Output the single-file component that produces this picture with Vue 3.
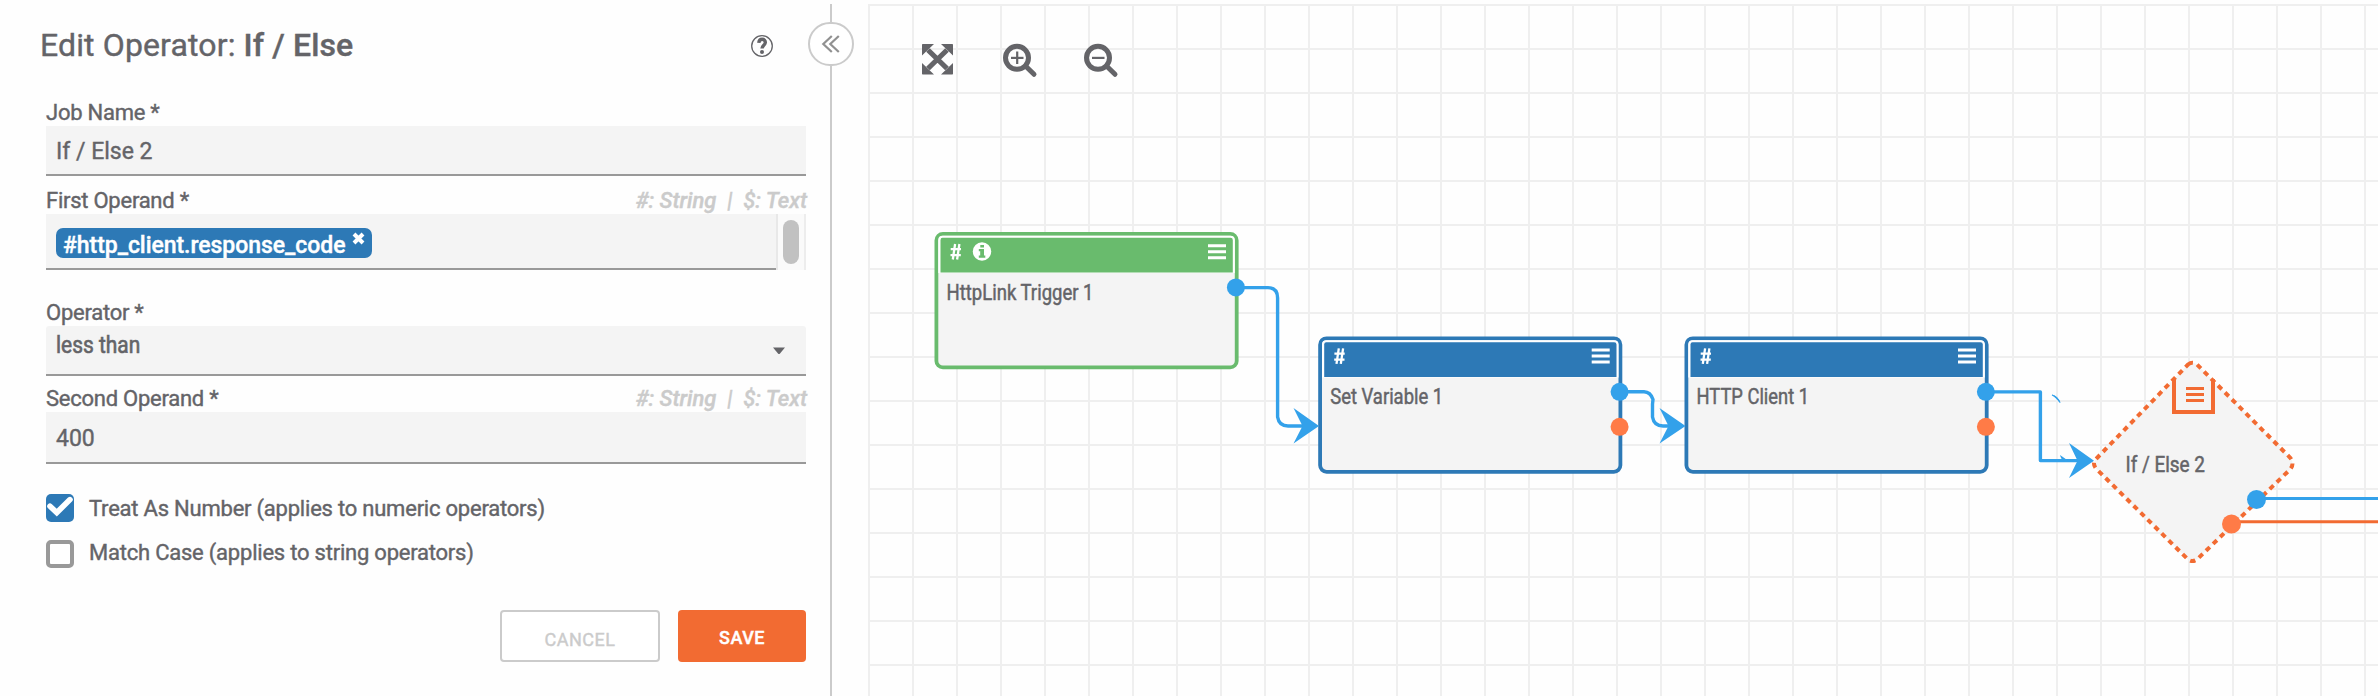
<script setup>
const nodes = [
  { id: 'trigger', title: 'HttpLink Trigger 1', width: 147, x: 934.5, y: 232, color: '#69bb6d', info: true, dots: ['#33a1ea'] },
  { id: 'variable', title: 'Set Variable 1', width: 113, x: 1318.2, y: 336.4, color: '#2d79b6', info: false, dots: ['#33a1ea', '#ff7b47'] },
  { id: 'client', title: 'HTTP Client 1', width: 112.5, x: 1684.5, y: 336.4, color: '#2d79b6', info: false, dots: ['#33a1ea', '#ff7b47'] },
]
</script>

<template>
  <main class="app">
    <section class="panel">
      <header class="heading">
        <h1>Edit Operator: <b>If / Else</b></h1>
        <svg class="help" width="24" height="24" viewBox="0 0 24 24">
          <circle cx="12" cy="12" r="10.3" fill="none" stroke="#646468" stroke-width="1.3" />
          <path d="M8.8 8.9C9.2 3.9 15.6 4.4 15.3 8.6C15.1 11.2 12 11.3 12 14.6" fill="none" stroke="#646468" stroke-width="3.4" />
          <circle cx="12" cy="18" r="2" fill="#646468" />
        </svg>
      </header>

      <div class="row label-job"><label>Job Name *</label></div>
      <div class="field job"><span>If / Else 2</span></div>

      <div class="row label-first"><label>First Operand *</label><i>#: String &nbsp;|&nbsp; $: Text</i></div>
      <div class="operand">
        <div class="field tags">
          <span class="tag"><b>#http_client.response_code</b>
            <svg width="13" height="13" viewBox="0 0 13 13"><path d="M2 2L11 11M11 2L2 11" stroke="#fff" stroke-width="4" /></svg>
          </span>
        </div>
        <div class="scroll"><div class="thumb"></div></div>
      </div>

      <div class="row label-op"><label>Operator *</label></div>
      <div class="field select"><span>less than</span>
        <svg width="12" height="8" viewBox="0 0 12 8"><path d="M0 .5H12L6.8 6.7Q6 7.5 5.2 6.7Z" fill="#646468" /></svg>
      </div>

      <div class="row label-second"><label>Second Operand *</label><i>#: String &nbsp;|&nbsp; $: Text</i></div>
      <div class="field second"><span>400</span></div>

      <div class="check first">
        <svg width="28" height="28" viewBox="0 0 28 28">
          <rect width="28" height="28" rx="5" fill="#2d79b6" />
          <path d="M4 12.2L10.8 18.6L24 5.6" fill="none" stroke="#fff" stroke-width="5.6" stroke-linejoin="miter" stroke-linecap="round" />
        </svg>
        <span>Treat As Number (applies to numeric operators)</span>
      </div>
      <div class="check">
        <svg width="28" height="28" viewBox="0 0 28 28"><rect x="2" y="2" width="24" height="24" rx="3" fill="#fff" stroke="#999" stroke-width="4" /></svg>
        <span>Match Case (applies to string operators)</span>
      </div>

      <footer class="actions">
        <button class="cancel">CANCEL</button>
        <button class="save">SAVE</button>
      </footer>
    </section>

    <div class="divider">
      <svg class="toggle" width="46" height="44" viewBox="0 0 46 44">
        <rect x="1" y="1" width="44" height="42" rx="21" fill="#fff" stroke="#cbcbcb" stroke-width="2" />
        <path d="M23.8 14L15.3 22L23.8 30M30.8 14L22.3 22L30.8 30" fill="none" stroke="#919191" stroke-width="2.2" />
      </svg>
    </div>

    <section class="canvas">
      <svg width="1510" height="692" viewBox="868 4 1510 692">
        <defs>
          <pattern id="grid" x="868" y="4" width="44" height="44" patternUnits="userSpaceOnUse">
            <path d="M0 1H44M1 0V44" stroke="#efefef" stroke-width="2" />
          </pattern>
          <g id="menu"><path d="M0 1.5H18M0 7.5H18M0 13.5H18" stroke-width="3" /></g>
        </defs>
        <rect x="868" y="4" width="1510" height="692" fill="url(#grid)" />

        <g fill="none" stroke="#646468">
          <path d="M928 50L947 68.500M947 50L928 68.500" stroke-width="5.200" />
          <path d="M922 44.700Q922 44 922.700 44H934L922 55.500ZM953 44.700Q953 44 952.300 44H941L953 55.500ZM922 73.800Q922 74.500 922.700 74.500H934L922 63ZM953 73.800Q953 74.500 952.300 74.500H941L953 63Z" fill="#646468" stroke="none" />
          <g v-for="x in [1017, 1098]" :key="x">
            <circle :cx="x" cy="57.800" r="11.500" stroke-width="5" />
            <path :d="`M${x + 8.5} 66L${x + 17} 74.300`" stroke-width="5" stroke-linecap="round" />
            <path :d="`M${x - 6} 57.900H${x + 6.500}`" stroke-width="2.200" />
          </g>
          <path d="M1017.200 51.500V64" stroke-width="2.200" />
        </g>

        <g v-for="n in nodes" :key="n.id" :transform="`translate(${n.x} ${n.y})`">
          <rect x="1.900" y="1.900" width="300.300" height="133.500" rx="6.500" fill="#f4f4f4" :stroke="n.color" stroke-width="3.800" />
          <path d="M3.800 41V8Q3.800 3.800 8 3.800H296Q300.300 3.800 300.300 8V41Z" fill="#fff" />
          <path d="M6 40.500V8Q6 5.800 8 5.800H296Q298.300 5.800 298.300 8V40.500Z" :fill="n.color" />
          <g fill="none" stroke="#fff"><path d="M16.200 17.200H26.500M16 23.200H26.300M20.600 12L18.300 27.500M24.900 12L22.600 27.500" stroke-width="2.300" /></g>
          <g v-if="n.info">
            <circle cx="47.500" cy="19.500" r="9.200" fill="#fff" />
            <path d="M45.800 13H49.500V15.500H45.800ZM44.300 17H49.500V23.500H50.800V25.700H44.300V23.500H45.700V19.200H44.300Z" :fill="n.color" />
          </g>
          <use href="#menu" x="273.500" y="12.200" stroke="#fff" />
          <text class="name" x="12" y="67.800" :textLength="n.width" lengthAdjust="spacingAndGlyphs">{{ n.title }}</text>
        </g>

        <path class="shape" d="M2188 364.500Q2192.500 361 2197 364.500L2290 457.500Q2295 463.500 2290 469.500L2198 558.500Q2192.500 563.500 2187 558.500L2096.500 469Q2091.500 463.500 2096.500 458.500Z" fill="#f4f4f4" stroke="#f26b32" stroke-width="4" stroke-dasharray="5.300 4.550" />
        <path d="M2174 379V412H2213V379" fill="none" stroke="#f26b32" stroke-width="4" />
        <use href="#menu" x="2186" y="387" stroke="#f26b32" />
        <text class="name" x="2125.500" y="472" textLength="79.500" lengthAdjust="spacingAndGlyphs">If / Else 2</text>

        <g fill="none" stroke="#33a1ea" stroke-width="3.400">
          <path d="M1236 287.600H1268Q1277.600 288 1277.600 298V417Q1279 426 1288 426H1304" />
          <path d="M1619 391.800H1644Q1650.500 392 1653 399.500L1652.500 404V417Q1654 426 1663 426H1670" />
          <path d="M1986 391.900H2040.400V460.600H2080" stroke-linejoin="round" />
          <path d="M2257 498.500H2378" stroke-width="3" />
          <path d="M2232 521.700H2378" stroke="#f26b32" stroke-width="3" />
        </g>
        <g fill="#33a1ea">
          <path d="M1293.500 408L1319 426L1293.500 443.500L1302.500 426Z" />
          <path d="M1659.500 408L1685.500 426L1659.500 443.500L1668.500 426Z" />
          <path d="M2069 443L2094 460.700L2069 478L2077.500 460.700Z" />
          <path d="M2052 394.500Q2058 395.500 2060.500 403Q2056 398.500 2052 394.500Z" />
          <path d="M2060 455L2070 462H2065Q2061 460 2060 455Z" />
        </g>
        <g fill="none" stroke="#33a1ea" stroke-width="1.200">
          <path d="M2052 395Q2057 397 2060 402.500" />
        </g>
        <template v-for="n in nodes" :key="n.id">
          <circle v-for="(c, i) in n.dots" :key="c" :cx="n.x + 301.400" :cy="n.y + 55.400 + i * 35" r="9" :fill="c" />
        </template>
        <circle cx="2256.500" cy="499.500" r="9.500" fill="#33a1ea" />
        <circle cx="2231.500" cy="524" r="9.500" fill="#ff7b47" />
      </svg>
    </section>
  </main>
</template>

<style>
body { background: #fefefe; overflow: hidden; }
</style>

<style scoped>
* { box-sizing: border-box; }
.app { display: flex; width: 2378px; height: 696px; background: #fefefe; color: #646468; font-family: Roboto, sans-serif; font-size: 22px; -webkit-text-stroke: .4px; }
.panel { display: flex; flex-direction: column; width: 808px; padding: 26px 2px 0 46px; flex: none; }
.heading { display: flex; justify-content: space-between; height: 70px; margin-left: -6px; padding-right: 32px; flex: none; }
h1 { margin: 0; font-size: 32px; line-height: 38px; font-weight: 400; white-space: nowrap; letter-spacing: .13px; }
h1 b { font-weight: 500; }
.help { margin-top: 8px; }
.row { display: flex; justify-content: space-between; height: 30px; line-height: 34px; white-space: nowrap; flex: none; }
.row label { letter-spacing: -.25px; }
.row i { color: #cbcbcb; font-weight: 500; margin-right: -1px; letter-spacing: -.03px; }
.label-first { margin-top: 8px; }
.field { width: 760px; flex: none; background: #f4f4f4; border-bottom: 2px solid #999; padding-left: 10px; display: flex; white-space: nowrap; font-size: 23px; }
.job { height: 50px; line-height: 52px; }
.operand { display: flex; height: 56px; flex: none; }
.tags { width: 730px; padding: 14px 0 0 10px; }
.tag { display: flex; align-items: flex-start; justify-content: space-between; width: 316px; height: 30px; padding: 0 7px; border-radius: 7px; background: #2d79b6; color: #fff; line-height: 35px; }
.tag b { font-weight: 500; letter-spacing: -.05px; }
.tag svg { margin-top: 4px; }
.scroll { width: 30px; display: flex; justify-content: center; padding-top: 6px; background: #fafafa; border-left: 2px solid #e8e8e8; border-right: 2px solid #ededed; }
.thumb { width: 16px; height: 44px; border-radius: 8px; background: #c1c1c1; }
.label-op { margin-top: 26px; }
.select { height: 50px; border-radius: 3px 3px 0 0; line-height: 40px; justify-content: space-between; padding-right: 21px; }
.select span { transform: scaleX(.91); transform-origin: left; height: 40px; -webkit-text-stroke-width: .6px; }
.select svg { margin-top: 21px; }
.label-second { margin-top: 6px; }
.second { height: 52px; line-height: 53px; }
.check { display: flex; gap: 15px; height: 28px; margin-top: 18px; line-height: 26px; flex: none; white-space: nowrap; letter-spacing: -.22px; }
.check.first { margin-top: 30px; line-height: 30px; }
.actions { display: flex; gap: 18px; margin: 42px 0 0 454px; }
button { height: 52px; padding: 0; font-family: Roboto, sans-serif; font-size: 18px; border-radius: 4px; letter-spacing: .5px; }
.cancel { width: 160px; background: #fff; color: #cbcbcb; border: 2px solid #cbcbcb; padding-top: 7px; }
.save { width: 128px; background: #f26b32; color: #fff; border: 0; padding-top: 3px; font-weight: 500; }
.divider { width: 60px; flex: none; padding-top: 22px; background: linear-gradient(#cbcbcb, #cbcbcb) 22px 4px / 2px 692px no-repeat; }
.toggle { display: block; }
.canvas { padding-top: 4px; flex: none; }
.canvas svg { display: block; }
.name { font-size: 22px; fill: #646468; stroke: #646468; stroke-width: .5px; }
</style>
